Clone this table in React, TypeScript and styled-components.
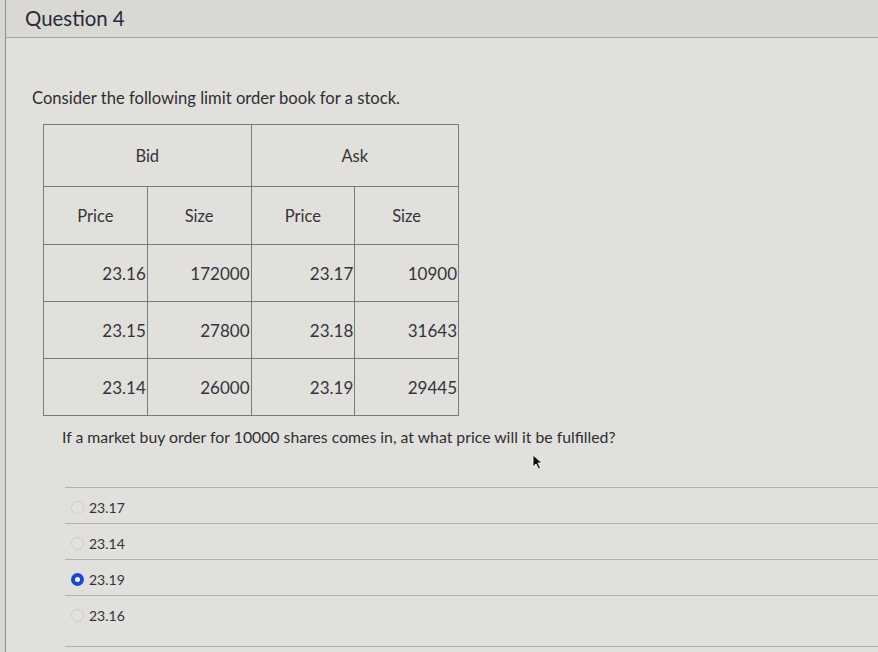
import React from "react";
import styled, { createGlobalStyle } from "styled-components";

const Global = createGlobalStyle`
  html, body { margin: 0; padding: 0; background: #d9d7d4; }
  body { font-family: Lato, "Noto Sans", sans-serif; color: #2f2f35; }
`;

const Page = styled.div`
  position: relative;
  margin-left: 5px;
  width: 873px;
  height: 652px;
  border-left: 1px solid #8f8d8a;
  background: #e2e0dd;
  overflow: hidden;
`;

const Header = styled.div`
  height: 37px;
  display: flex;
  align-items: center;
  padding-left: 19px;
  background: #dad8d5;
  border-bottom: 1px solid #a7a5a2;
`;

const Title = styled.h2`
  margin: 0;
  font-size: 20.4px;
  font-weight: 400;
  color: #2b2838;
  padding-bottom: 2px;
`;

const Body = styled.div`
  padding: 50px 0 0 26px;
`;

const Intro = styled.p`
  margin: 0 0 16px;
  font-size: 16.6px;
  color: #2e2e33;
`;

const Table = styled.table`
  margin-left: 11px;
  width: 416px;
  border-collapse: collapse;
  color: #34343a;
`;

const Th = styled.td<{ $h: number }>`
  height: ${(p) => p.$h}px;
  border: 1px solid #7c7a77;
  text-align: center;
  padding: 0;
  width: 25%;
  font-size: 16.5px;
`;

const Td = styled.td`
  height: 56px;
  border: 1px solid #7c7a77;
  text-align: right;
  padding: 0 1px 0 0;
  width: 25%;
  font-size: 17px;
`;

const Question = styled.p`
  margin: 11px 0 0 30px;
  font-size: 15.8px;
  color: #2e2e33;
`;

const Answers = styled.ul`
  list-style: none;
  margin: 41px 0 0 33px;
  padding: 0 0 15px;
  border-bottom: 1px solid #b3b1ae;
`;

const Answer = styled.li`
  box-sizing: border-box;
  display: flex;
  align-items: center;
  gap: 5px;
  height: 36px;
  padding: 3px 0 0 6px;
  border-top: 1px solid #b3b1ae;
  font-size: 14px;
  color: #33333a;
`;

const Radio = styled.span<{ $on?: boolean }>`
  box-sizing: border-box;
  width: 13px;
  height: 13px;
  border-radius: 50%;
  border: ${(p) => (p.$on ? "4px solid #1747d8" : "1px solid #cfcdca")};
  background: ${(p) => (p.$on ? "#ffffff" : "#e4e2df")};
  flex-shrink: 0;
`;

const Cursor = styled.svg`
  position: absolute;
  left: 526px;
  top: 454px;
`;

const rows = [
  ["23.16", "172000", "23.17", "10900"],
  ["23.15", "27800", "23.18", "31643"],
  ["23.14", "26000", "23.19", "29445"],
];

const options = [
  { v: "23.17", on: false },
  { v: "23.14", on: false },
  { v: "23.19", on: true },
  { v: "23.16", on: false },
];

export default function App() {
  return (
    <>
      <Global />
      <Page>
        <Header>
          <Title>Question 4</Title>
        </Header>
        <Body>
          <Intro>Consider the following limit order book for a stock.</Intro>
          <Table>
            <tbody>
              <tr>
                <Th $h={61} colSpan={2}>Bid</Th>
                <Th $h={61} colSpan={2}>Ask</Th>
              </tr>
              <tr>
                <Th $h={57}>Price</Th>
                <Th $h={57}>Size</Th>
                <Th $h={57}>Price</Th>
                <Th $h={57}>Size</Th>
              </tr>
              {rows.map((r, i) => (
                <tr key={i}>
                  {r.map((c, j) => (
                    <Td key={j}>{c}</Td>
                  ))}
                </tr>
              ))}
            </tbody>
          </Table>
          <Question>
            If a market buy order for 10000 shares comes in, at what price will it be fulfilled?
          </Question>
          <Answers>
            {options.map((o) => (
              <Answer key={o.v}>
                <Radio $on={o.on} />
                {o.v}
              </Answer>
            ))}
          </Answers>
        </Body>
        <Cursor width="12" height="16" viewBox="0 0 12 16">
          <path d="M1 1 L1 13 L4 10 L6.5 15 L8.5 14 L6 9 L10 9 Z" fill="#111" stroke="#fff" strokeWidth="0.8" />
        </Cursor>
      </Page>
    </>
  );
}
